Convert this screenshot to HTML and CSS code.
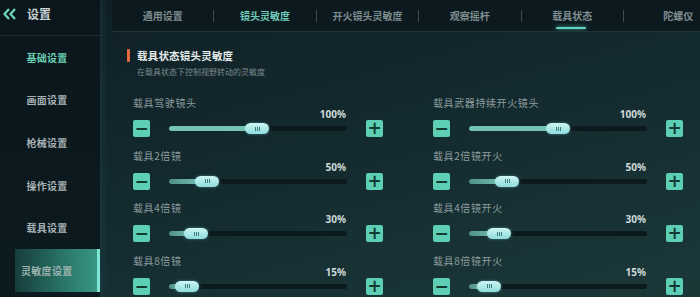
FILE: index.html
```html
<!DOCTYPE html>
<html>
  <head>
    <meta charset="utf-8" />
    <title>设置 - 灵敏度</title>
    <link rel="stylesheet" href="styles.css">
  </head>
  <body>
    <div class="app">
      <!-- 左侧菜单 -->
      <div class="sidebar">
        <div class="side-head">
          <svg class="back" width="14" height="12" viewBox="0 0 14 12">
            <path d="M6 1 L1.5 6 L6 11" fill="none" stroke="#6fd6bf" stroke-width="2.2" />
            <path d="M12 1 L7.5 6 L12 11" fill="none" stroke="#6fd6bf" stroke-width="2.2" />
          </svg>
          <span class="side-title">设置</span>
        </div>
        <div class="side-item highlight">基础设置</div>
        <div class="side-item">画面设置</div>
        <div class="side-item">枪械设置</div>
        <div class="side-item">操作设置</div>
        <div class="side-item">载具设置</div>
        <div class="side-item active">灵敏度设置</div>
      </div>

      <div class="main">
        <div class="tabs">
          <div class="tab">通用设置</div>
          <div class="tab current">镜头灵敏度</div>
          <div class="tab">开火镜头灵敏度</div>
          <div class="tab">观察摇杆</div>
          <div class="tab underline">载具状态</div>
          <div class="tab last">陀螺仪</div>
        </div>

        <div class="content">
          <div class="section-title">载具状态镜头灵敏度</div>
          <div class="section-desc">在载具状态下控制视野转动的灵敏度</div>

          <div class="grid">
            <div class="column">
              <div class="setting">
                <div class="label">载具驾驶镜头</div>
                <div class="control">
                  <div class="value">100%</div>
                  <div class="btn">&minus;</div>
                  <div class="track">
                    <div class="fill" style="width: 88px"></div>
                    <div class="thumb" style="left: 76px"><i></i><i></i><i></i></div>
                  </div>
                  <div class="btn">+</div>
                </div>
              </div>
              <div class="setting">
                <div class="label">载具2倍镜</div>
                <div class="control">
                  <div class="value">50%</div>
                  <div class="btn">&minus;</div>
                  <div class="track">
                    <div class="fill dim" style="width: 38px"></div>
                    <div class="thumb" style="left: 26px"><i></i><i></i><i></i></div>
                  </div>
                  <div class="btn">+</div>
                </div>
              </div>
              <div class="setting">
                <div class="label">载具4倍镜</div>
                <div class="control">
                  <div class="value">30%</div>
                  <div class="btn">&minus;</div>
                  <div class="track">
                    <div class="fill dim" style="width: 28px"></div>
                    <div class="thumb" style="left: 15px"><i></i><i></i><i></i></div>
                  </div>
                  <div class="btn">+</div>
                </div>
              </div>
              <div class="setting">
                <div class="label">载具8倍镜</div>
                <div class="control">
                  <div class="value">15%</div>
                  <div class="btn">&minus;</div>
                  <div class="track">
                    <div class="fill dim" style="width: 18px"></div>
                    <div class="thumb" style="left: 6px"><i></i><i></i><i></i></div>
                  </div>
                  <div class="btn">+</div>
                </div>
              </div>
            </div>

            <div class="column">
              <div class="setting">
                <div class="label">载具武器持续开火镜头</div>
                <div class="control">
                  <div class="value">100%</div>
                  <div class="btn">&minus;</div>
                  <div class="track">
                    <div class="fill" style="width: 89px"></div>
                    <div class="thumb" style="left: 77px"><i></i><i></i><i></i></div>
                  </div>
                  <div class="btn">+</div>
                </div>
              </div>
              <div class="setting">
                <div class="label">载具2倍镜开火</div>
                <div class="control">
                  <div class="value">50%</div>
                  <div class="btn">&minus;</div>
                  <div class="track">
                    <div class="fill dim" style="width: 38px"></div>
                    <div class="thumb" style="left: 26px"><i></i><i></i><i></i></div>
                  </div>
                  <div class="btn">+</div>
                </div>
              </div>
              <div class="setting">
                <div class="label">载具4倍镜开火</div>
                <div class="control">
                  <div class="value">30%</div>
                  <div class="btn">&minus;</div>
                  <div class="track">
                    <div class="fill dim" style="width: 30px"></div>
                    <div class="thumb" style="left: 18px"><i></i><i></i><i></i></div>
                  </div>
                  <div class="btn">+</div>
                </div>
              </div>
              <div class="setting">
                <div class="label">载具8倍镜开火</div>
                <div class="control">
                  <div class="value">15%</div>
                  <div class="btn">&minus;</div>
                  <div class="track">
                    <div class="fill dim" style="width: 20px"></div>
                    <div class="thumb" style="left: 8px"><i></i><i></i><i></i></div>
                  </div>
                  <div class="btn">+</div>
                </div>
              </div>
            </div>
          </div>
        </div>
      </div>
    </div>
  </body>
</html>
```

FILE: styles.css
```css
html,
body {
  margin: 0;
  padding: 0;
  width: 700px;
  height: 297px;
  overflow: hidden;
  background: #0f2126;
  font-family: "Noto Sans CJK SC", "Noto Sans", sans-serif;
}

.app {
  display: flex;
  width: 700px;
  height: 297px;
}

/* 左侧菜单 */
.sidebar {
  width: 100px;
  flex-shrink: 0;
  background: linear-gradient(180deg, #0a161b, #0c1b20);
  box-shadow: 3px 0 6px rgba(40, 80, 85, 0.35);
  position: relative;
  z-index: 1;
}

.side-head {
  height: 36px;
  display: flex;
  align-items: center;
  padding-left: 3px;
  padding-bottom: 8px;
  box-sizing: border-box;
  border-bottom: 1px solid #1c2e33;
}

.back {
  margin-right: 10px;
}

.side-title {
  color: #c9d2d3;
  font-size: 12px;
  font-weight: bold;
}

.side-item {
  height: 42.6px;
  display: flex;
  align-items: center;
  justify-content: center;
  padding-right: 6px;
  color: #a6b1b3;
  font-size: 10px;
  font-weight: bold;
  letter-spacing: 0.3px;
}

.side-item.highlight {
  color: #6ccfb3;
}

.side-item.active {
  margin-left: 15px;
  padding-right: 0;
  justify-content: flex-start;
  padding-left: 6px;
  color: #9fb3b0;
  background: linear-gradient(90deg, #173d3b, #2c7f70 70%, #3a9683);
  border-right: 3px solid #7fe6d6;
  box-sizing: border-box;
  height: 43px;
}

/* 主区域 */
.main {
  flex: 1;
  display: flex;
  flex-direction: column;
  overflow: hidden;
  background: linear-gradient(165deg, #0f2025 0%, #132a2f 45%, #1b3839 100%);
}

.tabs {
  flex-shrink: 0;
  height: 32px;
  margin-left: 12px;
  display: flex;
  align-items: center;
  background: #0c1a1f;
  border-bottom: 1px solid #1f3639;
  box-sizing: border-box;
  overflow: hidden;
}

.tab {
  flex-shrink: 0;
  width: 102.4px;
  height: 12px;
  display: flex;
  align-items: center;
  justify-content: center;
  border-right: 1px solid #3a4b4f;
  box-sizing: border-box;
  color: #7f8d90;
  font-size: 10px;
  font-weight: bold;
  position: relative;
}

.tab.current {
  color: #6fcdbb;
}

.tab.underline::after {
  content: "";
  position: absolute;
  left: 34px;
  width: 30px;
  top: 17px;
  height: 2px;
  border-radius: 1px;
  background: #62d2c2;
  box-shadow: 0 0 4px #4fc4b4;
}

.tab.last {
  border-right: none;
  padding-left: 6px;
}

/* 内容 */
.content {
  flex-shrink: 0;
  padding: 16px 15px 0 27px;
}

.section-title {
  display: flex;
  align-items: center;
  height: 14px;
  color: #e6ecec;
  font-size: 10.5px;
  font-weight: bold;
  letter-spacing: 0.2px;
}

.section-title::before {
  content: "";
  width: 3px;
  height: 13px;
  border-radius: 1px;
  background: #e8683e;
  margin-right: 7px;
}

.section-desc {
  margin-top: 4px;
  padding-left: 10px;
  height: 12px;
  line-height: 12px;
  color: #7c898c;
  font-size: 8px;
}

.grid {
  display: flex;
  gap: 48px;
  margin-top: 19px;
  padding-left: 6px;
}

.column {
  width: 252px;
}

.setting {
  margin-bottom: 12.5px;
}

.label {
  height: 12px;
  line-height: 12px;
  color: #8e9c9e;
  font-size: 10px;
  letter-spacing: 0.6px;
}

.control {
  display: grid;
  grid-template-columns: 17px 178px 17px;
  grid-template-rows: 11px 17px;
  column-gap: 19px;
  align-items: center;
}

.value {
  grid-column: 2;
  grid-row: 1;
  text-align: right;
  line-height: 11px;
  color: #cfdada;
  font-family: "Noto Sans", sans-serif;
  font-size: 10px;
  font-weight: bold;
  padding-right: 1px;
}

.btn {
  grid-row: 2;
  width: 17px;
  height: 17px;
  border-radius: 2px;
  background: #5ccfb4;
  color: #123a33;
  display: flex;
  align-items: center;
  justify-content: center;
  font-family: "DejaVu Sans", sans-serif;
  font-size: 17px;
  font-weight: bold;
  line-height: 17px;
}

.track {
  grid-row: 2;
  position: relative;
  height: 5px;
  border-radius: 3px;
  background: #0c1a1e;
}

.fill {
  height: 5px;
  border-radius: 3px;
  background: #74c3b5;
}

.fill.dim {
  background: linear-gradient(90deg, #4f8f86, #7cc8bb);
}

.thumb {
  position: absolute;
  top: -3px;
  width: 24px;
  height: 11px;
  border-radius: 6px;
  background: linear-gradient(180deg, #cdf6f4, #8fdcdc);
  box-shadow: 0 0 3px rgba(120, 220, 220, 0.5);
  display: flex;
  align-items: center;
  justify-content: center;
  gap: 1px;
}

.thumb i {
  width: 1px;
  height: 4px;
  background: #3f7b7a;
}
```
